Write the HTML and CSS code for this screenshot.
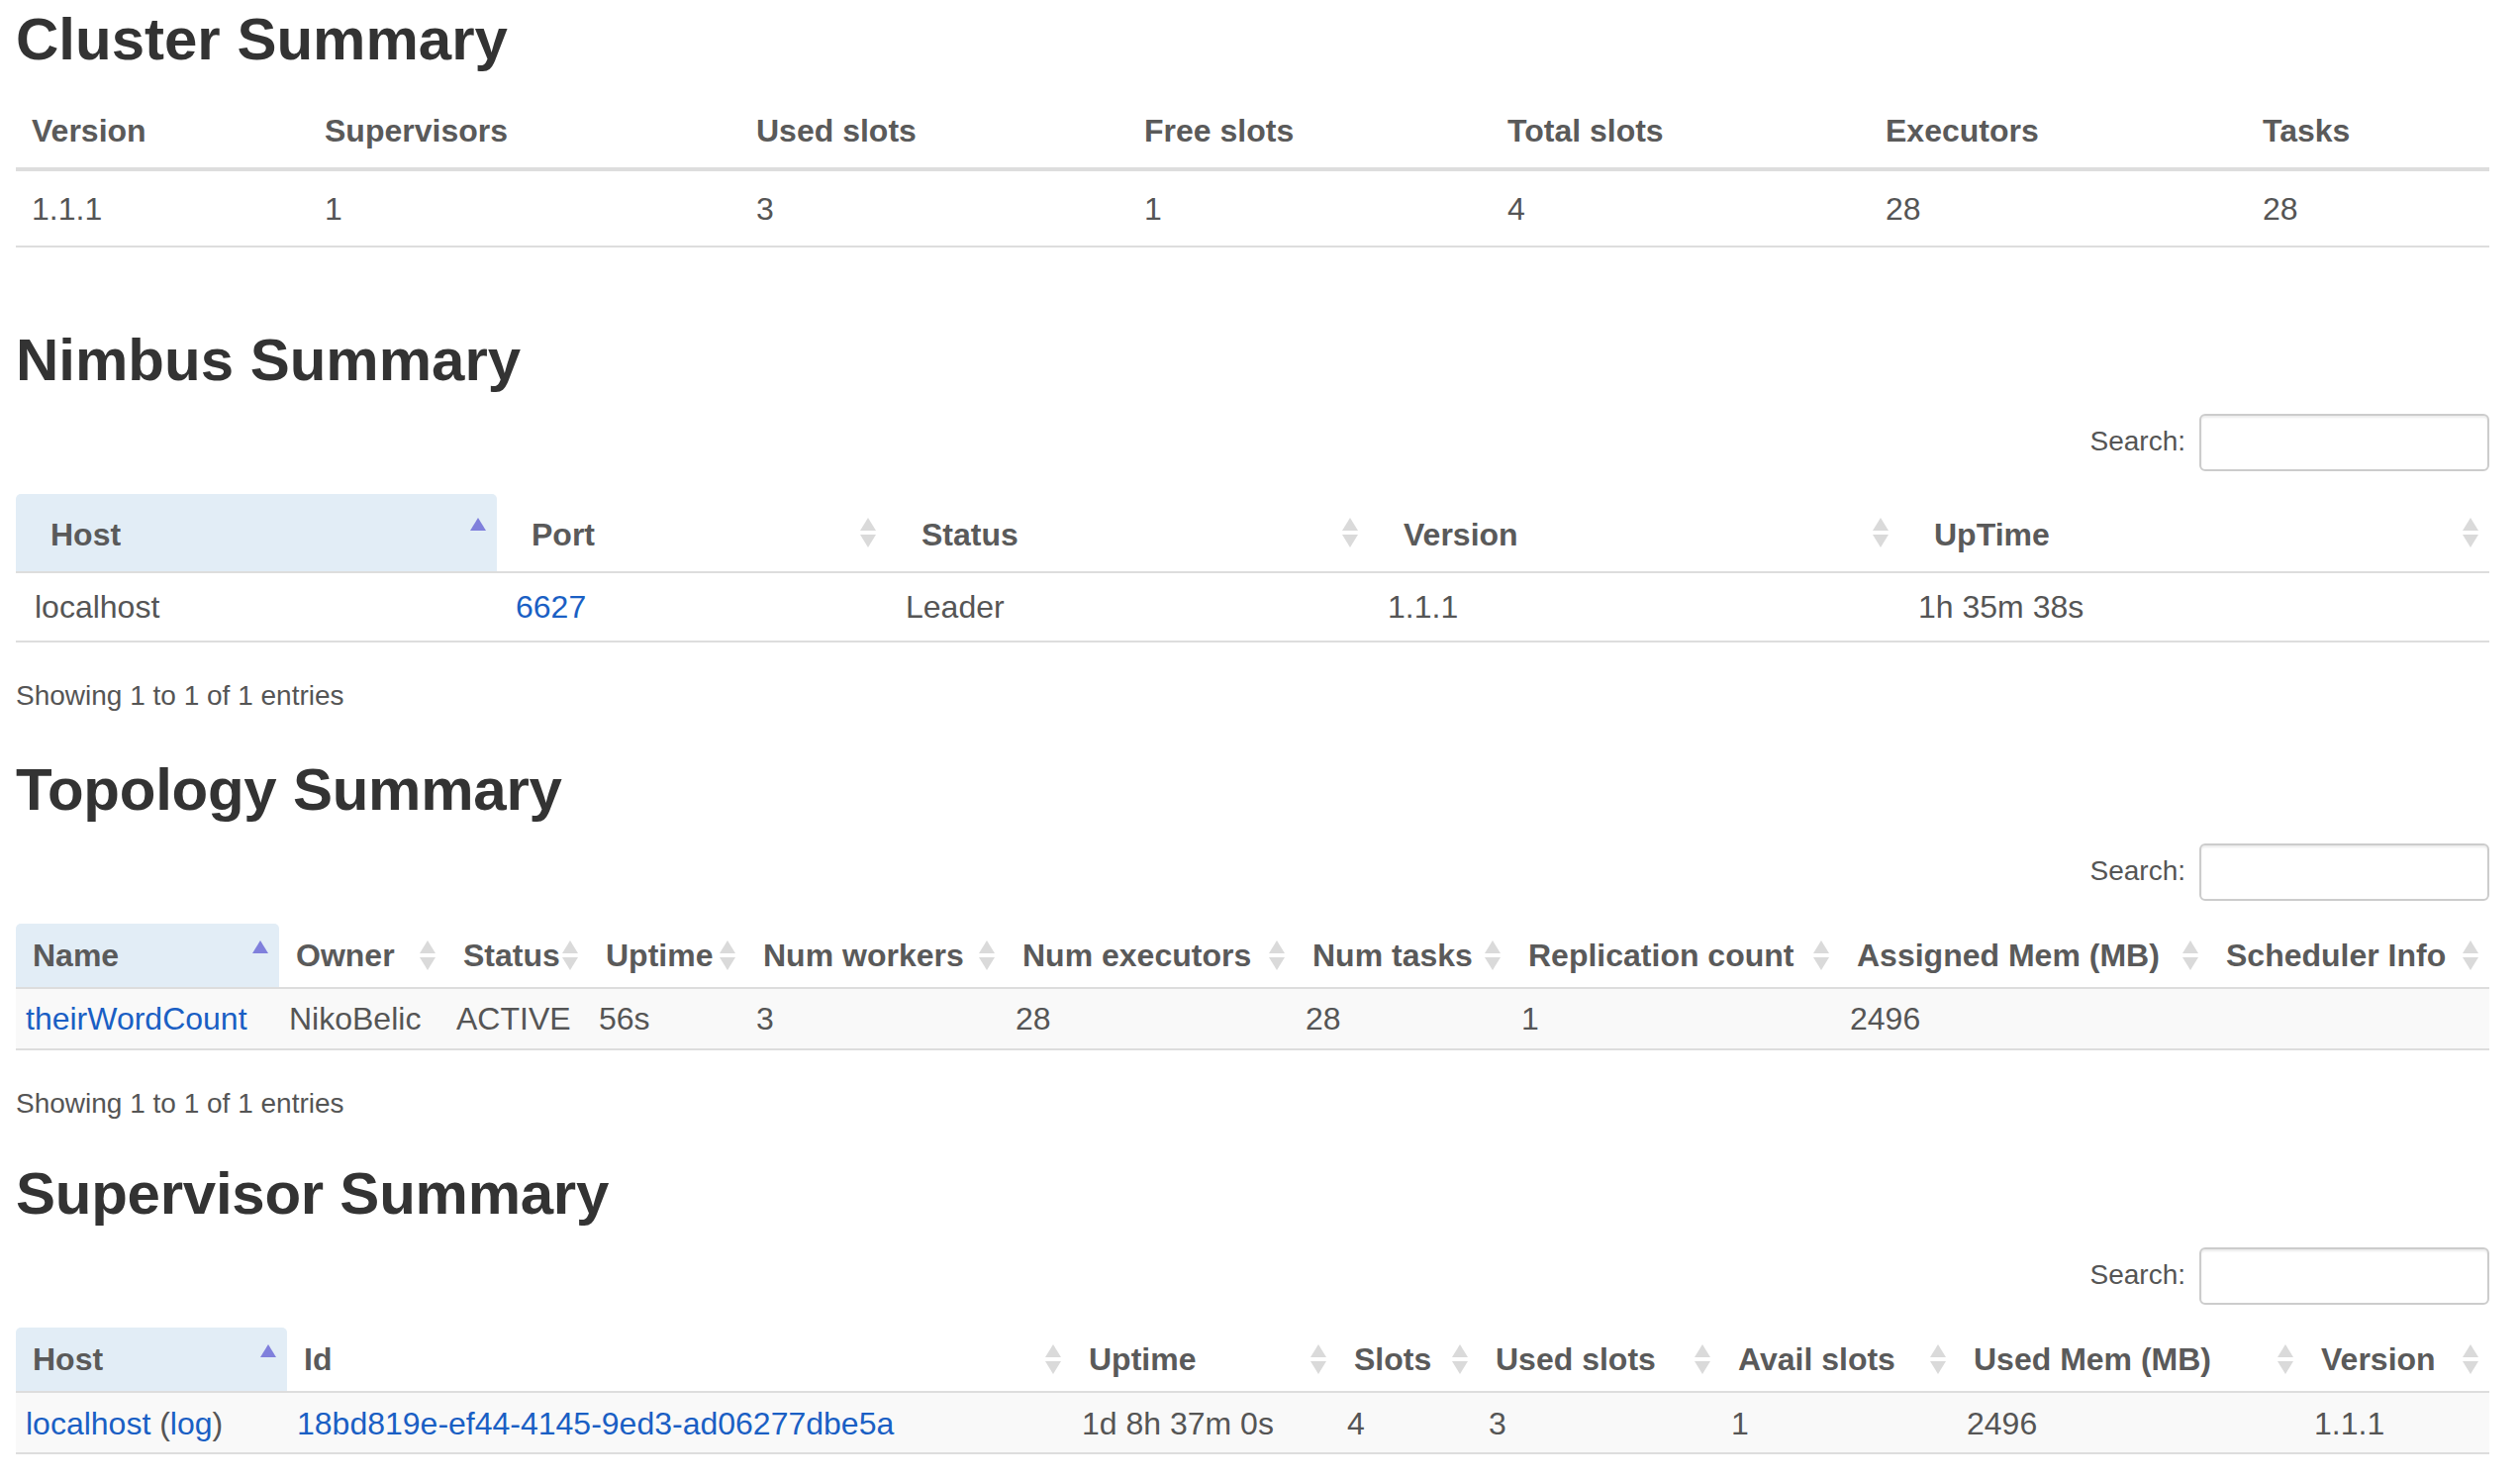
FILE: index.html
```html
<!DOCTYPE html>
<html lang="en">
<head>
<meta charset="utf-8">
<title>Storm UI</title>
<link rel="stylesheet" href="styles.css">
</head>
<body>
<main class="page">

  <section class="section section-first">
    <h2 class="title">Cluster Summary</h2>
    <table class="tbl tbl-cluster">
      <colgroup><col><col><col><col><col><col><col></colgroup>
      <thead>
        <tr><th>Version</th><th>Supervisors</th><th>Used slots</th><th>Free slots</th><th>Total slots</th><th>Executors</th><th>Tasks</th></tr>
      </thead>
      <tbody>
        <tr><td>1.1.1</td><td>1</td><td>3</td><td>1</td><td>4</td><td>28</td><td>28</td></tr>
      </tbody>
    </table>
  </section>

  <section class="section section-nimbus">
    <h2 class="title">Nimbus Summary</h2>
    <div class="filter"><label class="filter-label">Search:<input class="filter-input" type="search"></label></div>
    <table class="tbl dt tbl-nimbus">
      <colgroup><col><col><col><col><col></colgroup>
      <thead>
        <tr>
          <th class="sorted">Host<svg class="sort" viewBox="0 0 16 30"><path d="M8 0L16 13H0Z" class="asc"/></svg></th>
          <th>Port<svg class="sort" viewBox="0 0 16 30"><path d="M8 0L16 13H0Z"/><path d="M0 17H16L8 30Z"/></svg></th>
          <th>Status<svg class="sort" viewBox="0 0 16 30"><path d="M8 0L16 13H0Z"/><path d="M0 17H16L8 30Z"/></svg></th>
          <th>Version<svg class="sort" viewBox="0 0 16 30"><path d="M8 0L16 13H0Z"/><path d="M0 17H16L8 30Z"/></svg></th>
          <th>UpTime<svg class="sort" viewBox="0 0 16 30"><path d="M8 0L16 13H0Z"/><path d="M0 17H16L8 30Z"/></svg></th>
        </tr>
      </thead>
      <tbody>
        <tr><td>localhost</td><td><a class="link" href="#">6627</a></td><td>Leader</td><td>1.1.1</td><td>1h 35m 38s</td></tr>
      </tbody>
    </table>
    <div class="info">Showing 1 to 1 of 1 entries</div>
  </section>

  <section class="section section-topology">
    <h2 class="title">Topology Summary</h2>
    <div class="filter"><label class="filter-label">Search:<input class="filter-input" type="search"></label></div>
    <table class="tbl dt compact striped tbl-topology">
      <colgroup><col><col><col><col><col><col><col><col><col><col></colgroup>
      <thead>
        <tr>
          <th class="sorted">Name<svg class="sort" viewBox="0 0 16 30"><path d="M8 0L16 13H0Z" class="asc"/></svg></th>
          <th>Owner<svg class="sort" viewBox="0 0 16 30"><path d="M8 0L16 13H0Z"/><path d="M0 17H16L8 30Z"/></svg></th>
          <th>Status<svg class="sort" viewBox="0 0 16 30"><path d="M8 0L16 13H0Z"/><path d="M0 17H16L8 30Z"/></svg></th>
          <th>Uptime<svg class="sort" viewBox="0 0 16 30"><path d="M8 0L16 13H0Z"/><path d="M0 17H16L8 30Z"/></svg></th>
          <th>Num workers<svg class="sort" viewBox="0 0 16 30"><path d="M8 0L16 13H0Z"/><path d="M0 17H16L8 30Z"/></svg></th>
          <th>Num executors<svg class="sort" viewBox="0 0 16 30"><path d="M8 0L16 13H0Z"/><path d="M0 17H16L8 30Z"/></svg></th>
          <th>Num tasks<svg class="sort" viewBox="0 0 16 30"><path d="M8 0L16 13H0Z"/><path d="M0 17H16L8 30Z"/></svg></th>
          <th>Replication count<svg class="sort" viewBox="0 0 16 30"><path d="M8 0L16 13H0Z"/><path d="M0 17H16L8 30Z"/></svg></th>
          <th>Assigned Mem (MB)<svg class="sort" viewBox="0 0 16 30"><path d="M8 0L16 13H0Z"/><path d="M0 17H16L8 30Z"/></svg></th>
          <th>Scheduler Info<svg class="sort" viewBox="0 0 16 30"><path d="M8 0L16 13H0Z"/><path d="M0 17H16L8 30Z"/></svg></th>
        </tr>
      </thead>
      <tbody>
        <tr><td><a class="link" href="#">theirWordCount</a></td><td>NikoBelic</td><td>ACTIVE</td><td>56s</td><td>3</td><td>28</td><td>28</td><td>1</td><td>2496</td><td></td></tr>
      </tbody>
    </table>
    <div class="info">Showing 1 to 1 of 1 entries</div>
  </section>

  <section class="section section-supervisor">
    <h2 class="title">Supervisor Summary</h2>
    <div class="filter"><label class="filter-label">Search:<input class="filter-input" type="search"></label></div>
    <table class="tbl dt compact striped tbl-supervisor">
      <colgroup><col><col><col><col><col><col><col><col></colgroup>
      <thead>
        <tr>
          <th class="sorted">Host<svg class="sort" viewBox="0 0 16 30"><path d="M8 0L16 13H0Z" class="asc"/></svg></th>
          <th>Id<svg class="sort" viewBox="0 0 16 30"><path d="M8 0L16 13H0Z"/><path d="M0 17H16L8 30Z"/></svg></th>
          <th>Uptime<svg class="sort" viewBox="0 0 16 30"><path d="M8 0L16 13H0Z"/><path d="M0 17H16L8 30Z"/></svg></th>
          <th>Slots<svg class="sort" viewBox="0 0 16 30"><path d="M8 0L16 13H0Z"/><path d="M0 17H16L8 30Z"/></svg></th>
          <th>Used slots<svg class="sort" viewBox="0 0 16 30"><path d="M8 0L16 13H0Z"/><path d="M0 17H16L8 30Z"/></svg></th>
          <th>Avail slots<svg class="sort" viewBox="0 0 16 30"><path d="M8 0L16 13H0Z"/><path d="M0 17H16L8 30Z"/></svg></th>
          <th>Used Mem (MB)<svg class="sort" viewBox="0 0 16 30"><path d="M8 0L16 13H0Z"/><path d="M0 17H16L8 30Z"/></svg></th>
          <th>Version<svg class="sort" viewBox="0 0 16 30"><path d="M8 0L16 13H0Z"/><path d="M0 17H16L8 30Z"/></svg></th>
        </tr>
      </thead>
      <tbody>
        <tr><td><a class="link" href="#">localhost</a> (<a class="link" href="#">log</a>)</td><td><a class="link" href="#">18bd819e-ef44-4145-9ed3-ad06277dbe5a</a></td><td>1d 8h 37m 0s</td><td>4</td><td>3</td><td>1</td><td>2496</td><td>1.1.1</td></tr>
      </tbody>
    </table>
  </section>

</main>
</body>
</html>
```

FILE: styles.css
```css
html, body {
  margin: 0;
  padding: 0;
  background: #ffffff;
  overflow: hidden;
}

body {
  font-family: "Liberation Sans", Arial, Helvetica, sans-serif;
  color: #555555;
}

.page {
  display: flex;
  flex-direction: column;
  padding: 7px 31px 0 16px;
}

.section-nimbus { margin-top: 81px; }
.section-topology { margin-top: 42px; }
.section-supervisor { margin-top: 38px; }

.title {
  margin: 0 0 21px;
  font-size: 60px;
  line-height: 66px;
  font-weight: bold;
  color: #333333;
  white-space: nowrap;
}

.section-topology .title,
.section-supervisor .title {
  letter-spacing: -0.25px;
}

.filter {
  display: flex;
  justify-content: flex-end;
  height: 58px;
  margin-bottom: 23px;
}

.filter-label {
  display: flex;
  align-items: center;
  font-size: 28px;
  line-height: 40px;
  color: #555555;
  padding-bottom: 2px;
}

.filter-input {
  box-sizing: border-box;
  width: 293px;
  height: 58px;
  margin: 2px 0 0 14px;
  border: 2px solid #cccccc;
  border-radius: 6px;
  box-shadow: inset 0 2px 2px rgba(0, 0, 0, 0.075);
  background: #ffffff;
  font-size: 24px;
  padding: 0 20px;
}

.tbl {
  width: 2499px;
  table-layout: fixed;
  border-collapse: separate;
  border-spacing: 0;
  font-size: 32px;
}

.tbl th,
.tbl td {
  box-sizing: border-box;
  text-align: left;
  white-space: nowrap;
  overflow: visible;
  vertical-align: top;
}

.tbl th {
  position: relative;
  font-weight: bold;
  color: #5a5a5a;
  border-bottom: 2px solid #dddddd;
}

.tbl td {
  color: #555555;
  border-bottom: 2px solid #dddddd;
}

/* Cluster table */
.tbl-cluster th,
.tbl-cluster td {
  padding: 17px 16px 15px;
  line-height: 43px;
}
.tbl-cluster th { border-bottom-width: 4px; }

.tbl-cluster col:nth-child(1) { width: 296px; }
.tbl-cluster col:nth-child(2) { width: 436px; }
.tbl-cluster col:nth-child(3) { width: 392px; }
.tbl-cluster col:nth-child(4) { width: 367px; }
.tbl-cluster col:nth-child(5) { width: 382px; }
.tbl-cluster col:nth-child(6) { width: 381px; }
.tbl-cluster col:nth-child(7) { width: 245px; }

/* DataTables */
.dt th {
  padding: 21px 30px 17px 35px;
  line-height: 40px;
  border-radius: 5px 5px 0 0;
}
.dt td {
  padding: 14px 19px;
  line-height: 40px;
}

.dt th.sorted {
  background: #e2edf6;
}

.sort {
  position: absolute;
  right: 11px;
  top: 50%;
  width: 16px;
  height: 30px;
  margin-top: -15px;
}
.sort path { fill: #dadada; }
.sort path.asc { fill: #8080dc; }

.compact th {
  padding: 12px 20px 12px 17px;
}
.compact td {
  padding: 10px 10px;
}

.striped tbody tr td { background: #f9f9f9; }

.tbl-supervisor td {
  padding-top: 11px;
  padding-bottom: 9px;
}

.tbl-nimbus col:nth-child(1) { width: 486px; }
.tbl-nimbus col:nth-child(2) { width: 394px; }
.tbl-nimbus col:nth-child(3) { width: 487px; }
.tbl-nimbus col:nth-child(4) { width: 536px; }
.tbl-nimbus col:nth-child(5) { width: 596px; }

.tbl-topology col:nth-child(1) { width: 266px; }
.tbl-topology col:nth-child(2) { width: 169px; }
.tbl-topology col:nth-child(3) { width: 144px; }
.tbl-topology col:nth-child(4) { width: 159px; }
.tbl-topology col:nth-child(5) { width: 262px; }
.tbl-topology col:nth-child(6) { width: 293px; }
.tbl-topology col:nth-child(7) { width: 218px; }
.tbl-topology col:nth-child(8) { width: 332px; }
.tbl-topology col:nth-child(9) { width: 373px; }
.tbl-topology col:nth-child(10) { width: 283px; }

.tbl-supervisor col:nth-child(1) { width: 274px; }
.tbl-supervisor col:nth-child(2) { width: 793px; }
.tbl-supervisor col:nth-child(3) { width: 268px; }
.tbl-supervisor col:nth-child(4) { width: 143px; }
.tbl-supervisor col:nth-child(5) { width: 245px; }
.tbl-supervisor col:nth-child(6) { width: 238px; }
.tbl-supervisor col:nth-child(7) { width: 351px; }
.tbl-supervisor col:nth-child(8) { width: 187px; }

.link {
  color: #1a5fc4;
  text-decoration: none;
}

.info {
  margin-top: 34px;
  font-size: 28px;
  line-height: 40px;
  color: #555555;
}
```
